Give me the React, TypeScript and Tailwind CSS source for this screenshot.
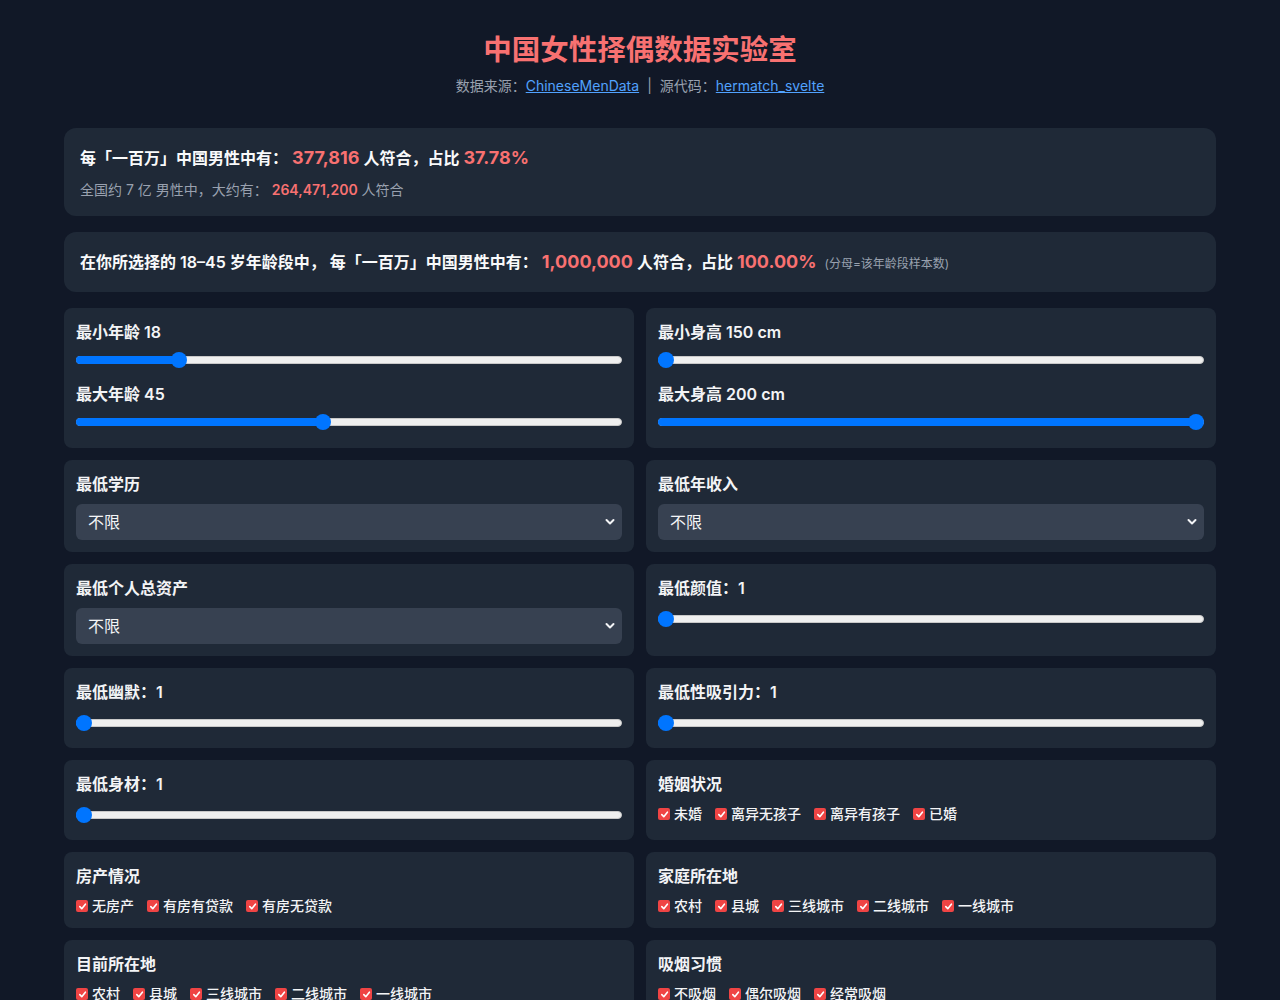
import React, { useState } from 'react';

const FONT = "font-['Inter','Noto_Sans_CJK_SC',sans-serif]";

function Slider({ value, min, max, gap = 'mt-2' }: { value: number; min: number; max: number; gap?: string }) {
    const p = (value - min) / (max - min);
    return (
        <div className={`relative h-4 mb-[5px] ${gap}`}>
            <div className="absolute left-0 right-0 top-1 h-2 rounded-full bg-[#efefef] border border-[#c8c8c8]" />
            <div className="absolute left-0 top-1 h-2 rounded-full bg-[#0075ff]" style={{ width: `calc(${p} * (100% - 16px) + 8px)` }} />
            <div className="absolute top-0 w-4 h-4 rounded-full bg-[#0075ff]" style={{ left: `calc(${p} * (100% - 16px))` }} />
        </div>
    );
}

function Label({ children }: { children: React.ReactNode }) {
    return <div className="text-base leading-6 font-semibold text-gray-100">{children}</div>;
}

function SliderCard({ label, value, min, max }: { label: string; value: number; min: number; max: number }) {
    return (
        <div className="rounded-lg bg-[#1f2937] p-3">
            <Label>{label}</Label>
            <Slider value={value} min={min} max={max} gap="mt-[11px]" />
        </div>
    );
}

function RangePairCard({ a, b, va, vb, min, max }: { a: string; b: string; va: number; vb: number; min: number; max: number }) {
    return (
        <div className="rounded-lg bg-[#1f2937] px-3 pt-3 pb-[13px]">
            <Label>{a}</Label>
            <Slider value={va} min={min} max={max} />
            <div className="mt-[14px]">
                <Label>{b}</Label>
            </div>
            <Slider value={vb} min={min} max={max} />
        </div>
    );
}

function SelectCard({ label }: { label: string }) {
    const [val, setVal] = useState('不限');
    return (
        <div className="rounded-lg bg-[#1f2937] p-3">
            <Label>{label}</Label>
            <div className="relative mt-2">
                <select
                    value={val}
                    onChange={(e) => setVal(e.target.value)}
                    className="block w-full h-9 appearance-none rounded-md bg-[#374151] px-3 text-base text-gray-100 outline-none"
                >
                    <option>不限</option>
                </select>
                <svg className="pointer-events-none absolute right-[7px] top-[14px]" width="10" height="8" viewBox="0 0 10 8">
                    <path d="M1.5 2 L5 5.5 L8.5 2" fill="none" stroke="#f3f4f6" strokeWidth="2" strokeLinecap="round" strokeLinejoin="round" />
                </svg>
            </div>
        </div>
    );
}

function CheckCard({ label, options }: { label: string; options: string[] }) {
    return (
        <div className="rounded-lg bg-[#1f2937] p-3">
            <Label>{label}</Label>
            <div className="mt-2 flex flex-wrap gap-x-[13px] text-sm leading-5 font-medium text-gray-100">
                {options.map((o) => (
                    <label key={o} className="flex items-center gap-1 cursor-pointer">
                        <span className="flex h-3 w-3 items-center justify-center rounded-[2px] bg-[#ef4444]">
                            <svg width="9" height="9" viewBox="0 0 10 10">
                                <path d="M2 5.2 L4.2 7.4 L8.2 2.4" fill="none" stroke="#fff" strokeWidth="1.8" strokeLinecap="round" strokeLinejoin="round" />
                            </svg>
                        </span>
                        {o}
                    </label>
                ))}
            </div>
        </div>
    );
}

const cities = ['农村', '县城', '三线城市', '二线城市', '一线城市'];

export default function App() {
    return (
        <div className={`min-h-screen bg-[#111827] text-gray-100 ${FONT}`}>
            <div className="mx-auto max-w-6xl pt-8 pb-10">
                <h1 className="text-center text-[28.5px] font-bold leading-9 text-[#f87171]">中国女性择偶数据实验室</h1>
                <p className="mt-2 mb-8 text-center text-sm leading-5 text-gray-400">
                    数据来源：<a href="#" className="text-blue-400 underline">ChineseMenData</a>
                    <span className="mx-2">|</span>
                    源代码：<a href="#" className="text-blue-400 underline">hermatch_svelte</a>
                </p>

                <div className="rounded-xl bg-[#1f2937] p-4">
                    <div className="text-base leading-7 font-semibold text-gray-50">
                        每「一百万」中国男性中有：{' '}
                        <span className="text-lg leading-7 font-bold text-[#f87171]">377,816</span> 人符合，占比{' '}
                        <span className="text-lg leading-7 font-bold text-[#f87171]">37.78%</span>
                    </div>
                    <div className="mt-2 text-sm leading-5 text-gray-400">
                        全国约 7 亿 男性中，大约有：{' '}
                        <span className="font-semibold text-[#f87171]">264,471,200</span> 人符合
                    </div>
                </div>

                <div className="mt-4 rounded-xl bg-[#1f2937] p-4">
                    <div className="text-base leading-7 font-semibold text-gray-50">
                        在你所选择的 18–45 岁年龄段中， 每「一百万」中国男性中有：{' '}
                        <span className="text-lg leading-7 font-bold text-[#f87171]">1,000,000</span> 人符合，占比{' '}
                        <span className="text-lg leading-7 font-bold text-[#f87171]">100.00%</span>
                        <span className="ml-2 text-xs leading-none font-normal text-gray-400">(分母=该年龄段样本数)</span>
                    </div>
                </div>

                <div className="mt-4 grid grid-cols-2 gap-3">
                    <RangePairCard a="最小年龄 18" b="最大年龄 45" va={18} vb={45} min={0} max={100} />
                    <RangePairCard a="最小身高 150 cm" b="最大身高 200 cm" va={150} vb={200} min={150} max={200} />

                    <SelectCard label="最低学历" />
                    <SelectCard label="最低年收入" />

                    <SelectCard label="最低个人总资产" />
                    <SliderCard label="最低颜值：1" value={1} min={1} max={10} />

                    <SliderCard label="最低幽默：1" value={1} min={1} max={10} />
                    <SliderCard label="最低性吸引力：1" value={1} min={1} max={10} />

                    <SliderCard label="最低身材：1" value={1} min={1} max={10} />
                    <CheckCard label="婚姻状况" options={['未婚', '离异无孩子', '离异有孩子', '已婚']} />

                    <CheckCard label="房产情况" options={['无房产', '有房有贷款', '有房无贷款']} />
                    <CheckCard label="家庭所在地" options={cities} />

                    <CheckCard label="目前所在地" options={cities} />
                    <CheckCard label="吸烟习惯" options={['不吸烟', '偶尔吸烟', '经常吸烟']} />
                </div>
            </div>
        </div>
    );
}
